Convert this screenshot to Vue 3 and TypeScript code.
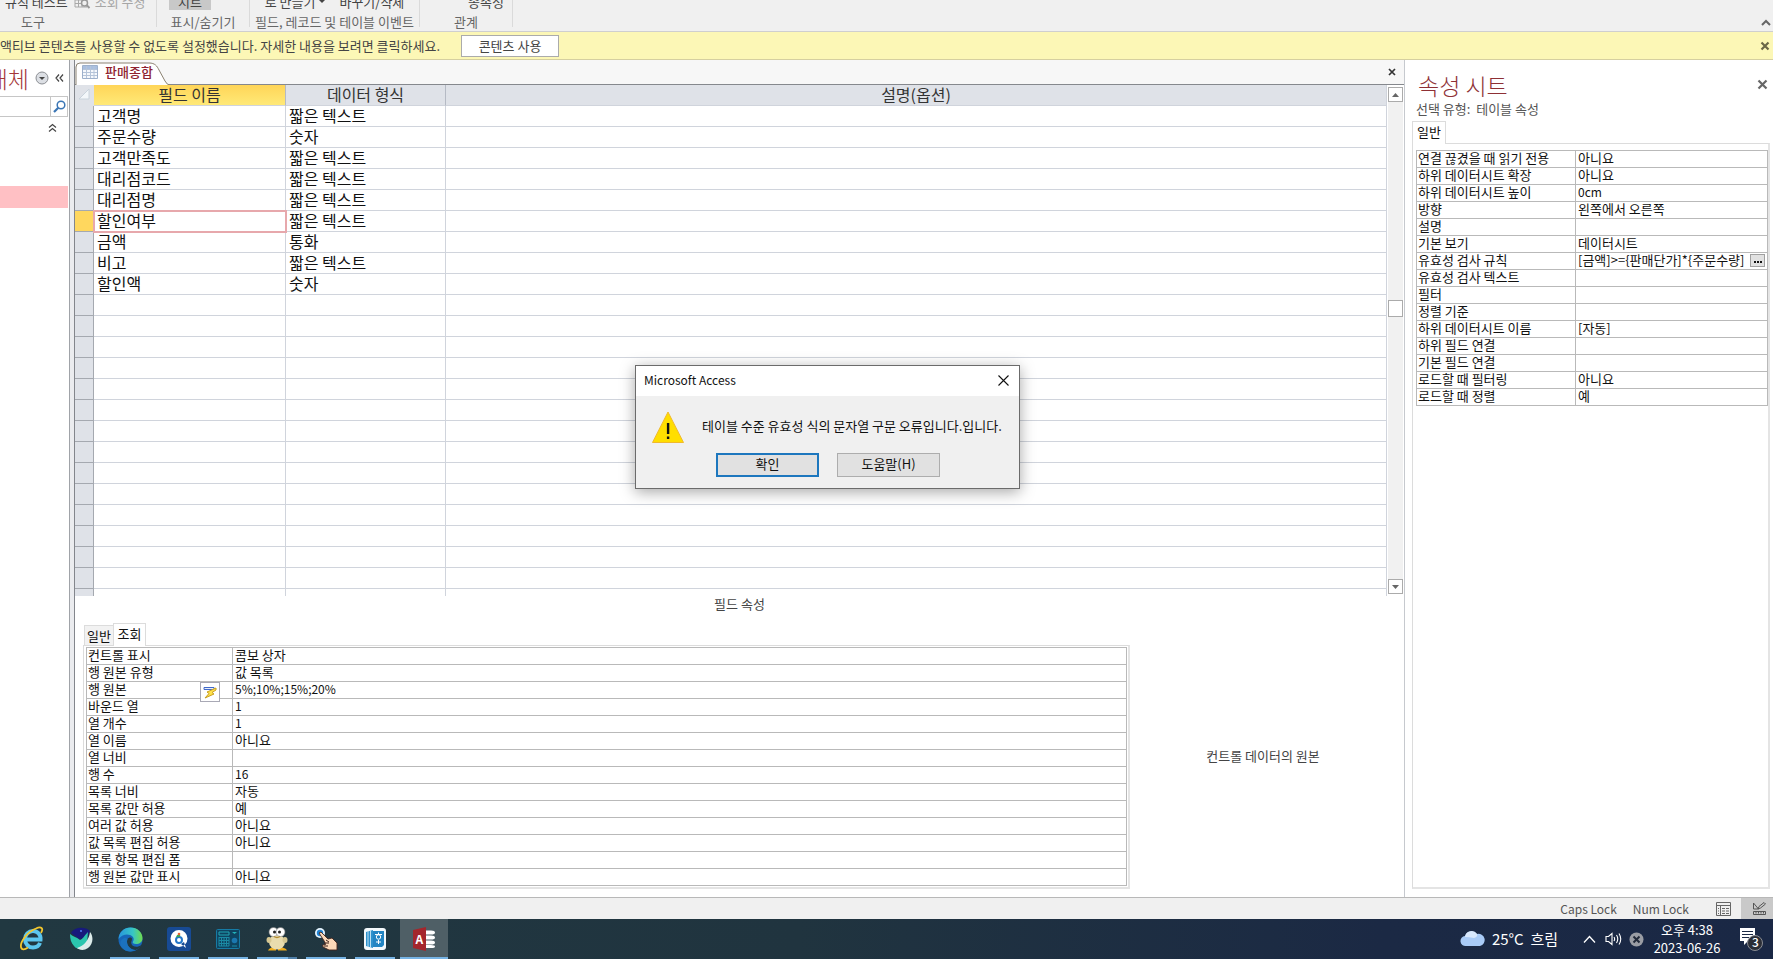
<script setup lang="ts">
import { ref } from 'vue'

interface Field { name: string; type: string }
interface Prop { label: string; value: string; tool?: 'builder' | 'dots' }

const fields: Field[] = [
  { name: '고객명', type: '짧은 텍스트' },
  { name: '주문수량', type: '숫자' },
  { name: '고객만족도', type: '짧은 텍스트' },
  { name: '대리점코드', type: '짧은 텍스트' },
  { name: '대리점명', type: '짧은 텍스트' },
  { name: '할인여부', type: '짧은 텍스트' },
  { name: '금액', type: '통화' },
  { name: '비고', type: '짧은 텍스트' },
  { name: '할인액', type: '숫자' },
]
const selected = ref(5)
const blankRows = 40

const lookup: Prop[] = [
  { label: '컨트롤 표시', value: '콤보 상자' },
  { label: '행 원본 유형', value: '값 목록' },
  { label: '행 원본', value: '5%;10%;15%;20%', tool: 'builder' },
  { label: '바운드 열', value: '1' },
  { label: '열 개수', value: '1' },
  { label: '열 이름', value: '아니요' },
  { label: '열 너비', value: '' },
  { label: '행 수', value: '16' },
  { label: '목록 너비', value: '자동' },
  { label: '목록 값만 허용', value: '예' },
  { label: '여러 값 허용', value: '아니요' },
  { label: '값 목록 편집 허용', value: '아니요' },
  { label: '목록 항목 편집 폼', value: '' },
  { label: '행 원본 값만 표시', value: '아니요' },
]
const sheet: Prop[] = [
  { label: '연결 끊겼을 때 읽기 전용', value: '아니요' },
  { label: '하위 데이터시트 확장', value: '아니요' },
  { label: '하위 데이터시트 높이', value: '0cm' },
  { label: '방향', value: '왼쪽에서 오른쪽' },
  { label: '설명', value: '' },
  { label: '기본 보기', value: '데이터시트' },
  { label: '유효성 검사 규칙', value: '[금액]>={판매단가]*{주문수량]', tool: 'dots' },
  { label: '유효성 검사 텍스트', value: '' },
  { label: '필터', value: '' },
  { label: '정렬 기준', value: '' },
  { label: '하위 데이터시트 이름', value: '[자동]' },
  { label: '하위 필드 연결', value: '' },
  { label: '기본 필드 연결', value: '' },
  { label: '로드할 때 필터링', value: '아니요' },
  { label: '로드할 때 정렬', value: '예' },
]
const isLatin = (text: string) => /^[\x20-\x7e]+$/.test(text)
</script>

<template>
  <div class="app">
    <header class="ribbon">
      <div class="group tools">
        <div class="cmds"><button>규칙 테스트</button>
          <button class="off">
            <svg width="17" height="16" viewBox="0 0 17 16"><path d="M1 3h12v10H1zM1 6h12M1 9.500h12M4.500 3v10M8 3v10" fill="none" stroke="#a8a8a8" /><circle cx="10.500" cy="9" r="3" fill="#f0f0f0" stroke="#999" stroke-width="1.500" /><path d="M12.500 11l3 3" stroke="#999" stroke-width="2" /></svg>
            조회 수정</button></div>
        <div class="gname">도구</div>
      </div>
      <div class="group show">
        <div class="cmds"><button class="on">시트</button></div>
        <div class="gname">표시/숨기기</div>
      </div>
      <div class="group events">
        <div class="cmds"><button>로 만들기 <i class="tri"></i></button><button>바꾸기/삭제</button></div>
        <div class="gname">필드, 레코드 및 테이블 이벤트</div>
      </div>
      <div class="group relation">
        <div class="cmds"><button>종속성</button></div>
        <div class="gname">관계</div>
      </div>
      <button class="collapse" aria-label="리본 축소"><svg width="10" height="8" viewBox="0 0 10 8"><path d="M1 6l4-4 4 4" fill="none" stroke="#666" stroke-width="2" /></svg></button>
    </header>

    <div class="notice">
      <div class="msg"><span>액티브 콘텐츠를 사용할 수 없도록 설정했습니다. 자세한 내용을 보려면 클릭하세요.</span></div>
      <button class="enable">콘텐츠 사용</button>
      <button class="x" aria-label="메시지 닫기"><svg width="10" height="10" viewBox="0 0 10 10"><path d="M1.500 1.500l7 7M8.500 1.500l-7 7" stroke="#6b6748" stroke-width="2.200" /></svg></button>
    </div>

    <main class="work">
      <nav class="nav">
        <div class="navhead">
          <h2>개체</h2>
          <button aria-label="탐색 메뉴"><svg width="14" height="14" viewBox="0 0 14 14"><circle cx="7" cy="7" r="6" fill="#dcdfe4" stroke="#8b8e93" /><path d="M4 6h6l-3 3z" fill="#444" /></svg></button>
          <button aria-label="탐색 창 접기"><svg width="9" height="10" viewBox="0 0 9 10"><path d="M4 1.500L1 5l3 3.500M8 1.500L5 5l3 3.500" fill="none" stroke="#444" stroke-width="1.200" /></svg></button>
        </div>
        <div class="search">
          <input type="text" aria-label="검색" />
          <button aria-label="검색 실행"><svg width="13" height="13" viewBox="0 0 13 13"><circle cx="8" cy="5" r="3.800" fill="#fff" stroke="#3b76b5" stroke-width="1.500" /><path d="M5.300 7.700L1 12" stroke="#3b76b5" stroke-width="2.200" /></svg></button>
        </div>
        <button class="fold" aria-label="그룹 접기"><svg width="9" height="10" viewBox="0 0 9 10"><path d="M1 4.500L4.500 1.500 8 4.500M1 8.500l3.500-3 3.500 3" fill="none" stroke="#444" stroke-width="1.200" /></svg></button>
        <div class="current"></div>
      </nav>
      <div class="splitter"></div>

      <section class="doc">
        <div class="tabs">
          <svg class="tabshape" width="95" height="23" viewBox="0 0 95 23"><path d="M1 23V5q0-4 4-4h69c6 0 8 3 10 7l6 11q2 4 5 4" fill="#fff" stroke="#8b8272" /></svg>
          <button class="tab" role="tab" aria-selected="true">
            <svg width="16" height="14" viewBox="0 0 16 14"><path d="M.5.5h15v13H.5z" fill="#f5f8fc" stroke="#9db0cb" /><path d="M1 1h14v3H1z" fill="#a9bfdf" /><path d="M1 4.500h14M1 7.500h14M1 10.500h14M4.500 1v12M8.500 1v12M12 1v12" stroke="#b5c4d9" fill="none" /></svg>
            판매종합
          </button>
          <button class="x docx" aria-label="문서 닫기"><svg width="8" height="8" viewBox="0 0 8 8"><path d="M1 1l6 6M7 1L1 7" stroke="#333" stroke-width="1.700" /></svg></button>
        </div>
        <div class="gridwrap">
          <div class="gridclip">
            <table class="grid">
              <thead>
                <tr><th class="sel"><svg width="12" height="12" viewBox="0 0 12 12"><path d="M11 1v10H1z" fill="#f3f7fa" stroke="#c9d3dc" /></svg></th><th class="name hot">필드 이름</th><th class="type">데이터 형식</th><th>설명(옵션)</th></tr>
              </thead>
              <tbody>
                <tr v-for="(f, i) in fields" :key="f.name" :class="{ active: i === selected }" @click="selected = i">
                  <td class="sel"></td>
                  <td class="name"><input v-if="i === selected" :value="f.name" aria-label="필드 이름" /><template v-else>{{ f.name }}</template></td>
                  <td>{{ f.type }}</td>
                  <td></td>
                </tr>
                <tr v-for="n in blankRows" :key="n" class="blank"><td class="sel"></td><td></td><td></td><td></td></tr>
              </tbody>
            </table>
          </div>
          <div class="scroll">
            <button aria-label="위로"><svg width="7" height="4" viewBox="0 0 7 4"><path d="M0 4h7L3.500 0z" fill="#666" /></svg></button>
            <div class="track"><div class="thumb"></div></div>
            <button aria-label="아래로"><svg width="7" height="4" viewBox="0 0 7 4"><path d="M0 0h7L3.500 4z" fill="#666" /></svg></button>
          </div>
        </div>
        <div class="caption">필드 속성</div>
        <div class="lower">
          <div class="fieldprops">
            <div class="ptabs" role="tablist"><button role="tab" class="back">일반</button><button role="tab" class="front" aria-selected="true">조회</button></div>
            <div class="panel">
              <table class="props lookup">
                <tbody>
                  <tr v-for="p in lookup" :key="p.label">
                    <th scope="row">{{ p.label }}
                      <button v-if="p.tool" class="builder" aria-label="작성기"><svg width="18" height="18" viewBox="0 0 18 18"><path d="M3 4.500h10v2H3z" fill="#e8eefb" stroke="#4169c8" /><path d="M15 5L6 9l2 1.500L4 15l9-4-2-1.500L15 7z" fill="#ffe14a" stroke="#c9a022" /></svg></button>
                    </th>
                    <td :class="{ latin: isLatin(p.value) }">{{ p.value }}</td>
                  </tr>
                </tbody>
              </table>
            </div>
          </div>
          <p class="hint">컨트롤 데이터의 원본</p>
        </div>
      </section>

      <aside class="sheet">
        <div class="shead"><h1>속성 시트</h1><button class="x" aria-label="속성 시트 닫기"><svg width="11" height="11" viewBox="0 0 11 11"><path d="M1.500 1.500l8 8M9.500 1.500l-8 8" stroke="#666" stroke-width="2.200" /></svg></button></div>
        <p class="kind">선택 유형:&nbsp; 테이블 속성</p>
        <div class="ptabs"><button role="tab" class="front" aria-selected="true">일반</button></div>
        <div class="panel">
          <table class="props">
            <tbody>
              <tr v-for="p in sheet" :key="p.label">
                <th scope="row">{{ p.label }}</th>
                <td :class="{ latin: isLatin(p.value) }"><div class="val"><span>{{ p.value }}</span><button v-if="p.tool" class="dots" aria-label="식 작성기"><i></i><i></i><i></i></button></div></td>
              </tr>
            </tbody>
          </table>
        </div>
      </aside>
    </main>

    <footer class="status">
      <span>Caps Lock</span><span>Num Lock</span>
      <button class="view" aria-label="데이터시트 보기"><svg width="15" height="14" viewBox="0 0 15 14"><path d="M.5.500h14v13H.5zM.5 3.500h14M4.500 3.500v10" fill="none" stroke="#666" /><path d="M6 6.500h3M10 6.500h3M6 9h3M10 9h3M6 11.500h3M10 11.500h3M2 6.500h1M2 9h1M2 11.500h1" stroke="#666" /></svg></button>
      <button class="view design" aria-label="디자인 보기"><svg width="15" height="14" viewBox="0 0 15 14"><path d="M1.500 9.500h12v3h-12zM4 10v1.500M6.500 10v1.500M9 10v1.500M11.500 10v1.500M1.500 1v6h5zM6 7l1-2.500L12 .500l1.500 1.500L8.500 6z" fill="none" stroke="#555" /></svg></button>
    </footer>

    <div class="taskbar">
      <div class="apps">
        <button aria-label="Internet Explorer"><svg width="26" height="26" viewBox="0 0 26 26"><path d="M6.500 13.500h15c.4-5-3-8.500-7.500-8.500s-8 3.700-8 8.200 3.500 8.300 8 8.300c3.500 0 6-1.800 7-4.600" fill="none" stroke="#5cc6ee" stroke-width="4" /><path d="M22 7c3-5 0-7-5-4.500C8 6 1 16 2 21c.6 3.500 4 2.500 7 .5" fill="none" stroke="#f3c62d" stroke-width="1.800" /></svg></button>
        <button aria-label="Whale"><svg width="24" height="24" viewBox="0 0 24 24"><path d="M2 6C5 0 16-1 21 4l-3 7-8 1z" fill="#171a7c" /><path d="M1 7c3 3 7 3 10 6 3-1 4-4 8-8-1 8 0 12-2 15-3 3-9 3-12-1C2 16 1 12 1 7z" fill="#2bc5ae" /><path d="M21 5c4 5 3 12-2 16-4 3-9 2-11 0 7-2 12-8 13-16z" fill="#dcebea" /><circle cx="12" cy="4" r="1" fill="#4f7ff5" /></svg></button>
        <button class="run" aria-label="Edge"><svg width="25" height="25" viewBox="0 0 25 25"><defs><linearGradient id="eg" x1="0" x2="1"><stop stop-color="#2795de" /><stop offset=".6" stop-color="#37c6c5" /><stop offset="1" stop-color="#70dc4d" /></linearGradient></defs><circle cx="12.500" cy="12.500" r="12" fill="#1766b9" /><path d="M.5 12C1 5 6 .5 12.500.5c7 0 12 5 12 10.500 0 4-3 6-6.500 6-2.500 0-4-1-3-2.500 1-1.500 1-3.500-.5-5C12 7 5 6 .5 12z" fill="url(#eg)" /><path d="M9.500 12c-2 5 2 11 8 11 3-1 5-3 6-5-4 3-9 2-10-1-1-2 .5-3 .5-5s-3-2-4.500 0z" fill="#213941" /><path d="M9.500 12c-2 5 2 10.500 8 11-5 3-13 1-15-5-1-5 4-9 7-6z" fill="#1b72bf" /></svg></button>
        <button class="run" aria-label="검색 도우미"><svg width="24" height="24" viewBox="0 0 24 24"><rect width="24" height="24" rx="3" fill="#174a94" /><path d="M12 3a8 8 0 1 1 0 17 8 8 0 0 1 0-17zM14 17l5 4-2-6z" fill="#fff" /><circle cx="12" cy="13" r="3" fill="none" stroke="#2577c9" stroke-width="2" /><path d="M10 10q1-2 3-1" stroke="#39a852" stroke-width="2" fill="none" /><circle cx="12" cy="7" r="1.300" fill="#e95d32" /></svg></button>
        <button class="run" aria-label="제어판"><svg width="24" height="20" viewBox="0 0 24 20"><rect x=".5" y=".5" width="23" height="19" rx="1" fill="#0e4461" stroke="#167ba5" /><path d="M3 3h10v3H3z" fill="none" stroke="#20a5b4" /><path d="M3 8.500h10M3 11.500h10M3 14.500h10M3 17h10M3 8v9M5.500 8v9M8 8v9M10.500 8v9M13 8v9" stroke="#1b8ba5" /><path d="M16 3h5l-2.500 2z" fill="#24b3b9" /><circle cx="18.500" cy="11.500" r="2.800" fill="#1b77af" /><path d="M16 17h5" stroke="#1b8ba5" /></svg></button>
        <button class="run multi" aria-label="알집"><svg width="22" height="24" viewBox="0 0 22 24"><path d="M3 22q3-3 7 0v1.500H2zM12 22q4-3 8 0l1 1.500h-9z" fill="#f0ad1e" /><ellipse cx="11" cy="15" rx="8" ry="7.500" fill="#e9dcae" /><ellipse cx="3" cy="13" rx="2.500" ry="3" fill="#d6c792" /><ellipse cx="19" cy="13" rx="2.500" ry="3" fill="#d6c792" /><circle cx="7.500" cy="5" r="4.500" fill="#fff" stroke="#777" stroke-width=".6" /><circle cx="14.500" cy="5" r="4.500" fill="#fff" stroke="#777" stroke-width=".6" /><circle cx="8.500" cy="5" r="1.500" fill="#222" /><circle cx="13.500" cy="5" r="1.500" fill="#222" /><path d="M8 9.500q3 2 6 0" stroke="#b38d32" stroke-width="1.500" fill="none" /></svg></button>
        <button class="run" aria-label="원격 지원"><svg width="24" height="24" viewBox="0 0 24 24"><circle cx="6" cy="6" r="5" fill="#e6f5ff" /><circle cx="6" cy="6" r="3.200" fill="#2183d2" /><path d="M5 6l2-1 7 7 4-1 5 5v7h-8l-6-3-.5-2 3-.5-1-3z" fill="#fbd8b8" stroke="#43251c" stroke-width=".9" /><path d="M10 16h5M10 19h4M12 13l3 2" stroke="#43251c" /></svg></button>
        <button class="run" aria-label="문서"><svg width="24" height="24" viewBox="0 0 24 24"><rect x="1" y="1" width="22" height="22" rx="3" fill="#f4f9fc" /><path d="M3 5l7-2v18l-7-2z" fill="#2e91cc" /><path d="M5 4v16M7.500 3v18" stroke="#bde0f2" /><path d="M10 4h11v14l-2 2h-9z" fill="#2385c3" /><circle cx="15.500" cy="10" r="2.200" fill="none" stroke="#fff" /><path d="M15.500 5.500v2M12 7.500h7M13 15h5M15.500 13v4" stroke="#fff" /></svg></button>
        <button class="run current-app" aria-label="Access"><svg width="24" height="24" viewBox="0 0 24 24"><path d="M1 3l13-3v24L1 21z" fill="#a4262c" /><text x="3.500" y="16.500" font-size="12" font-weight="700" fill="#fff">A</text><path d="M14 3.500h5q4 0 4 2t-4 2h-5zM14 8.500h5q4 0 4 2t-4 2h-5zM14 13.500h5q4 0 4 2t-4 2h-5z" fill="#fff" /><path d="M14 18h5q4 0 4 1.500T19 21h-5z" fill="#fff" /></svg></button>
      </div>
      <div class="tray">
        <button class="weather"><svg width="25" height="17" viewBox="0 0 25 17"><path d="M6 16a5 5 0 0 1-1-10A7 7 0 0 1 17 4a6 6 0 0 1 3 12z" fill="#a9cbf7" /><path d="M5 7a6.500 6.500 0 0 1 12-3q1 3-3 4-5-1-9-1z" fill="#d8e8fd" /></svg>25°C&nbsp; 흐림</button>
        <button aria-label="숨겨진 아이콘"><svg width="13" height="9" viewBox="0 0 13 9"><path d="M1 7.500l5.500-6 5.500 6" fill="none" stroke="#fff" stroke-width="1.300" /></svg></button>
        <button class="snd" aria-label="볼륨"><svg width="17" height="14" viewBox="0 0 17 14"><path d="M1 4.500h2.500L7 1.500v11L3.500 9.500H1zM9 5q1.300 2 0 4M11.500 3q2.500 4 0 8M14 1.500q3.500 5.500 0 11" fill="none" stroke="#fff" stroke-width="1.100" /></svg></button>
        <button class="err" aria-label="알림 상태"><svg width="15" height="15" viewBox="0 0 15 15"><circle cx="7.500" cy="7.500" r="7" fill="#9a9da4" /><path d="M4.500 4.500l6 6M10.500 4.500l-6 6" stroke="#222a3a" stroke-width="2" /></svg></button>
        <button class="clock"><span>오후 4:38</span><span>2023-06-26</span></button>
        <button class="note" aria-label="알림"><svg width="26" height="26" viewBox="0 0 26 26"><path d="M1 2h15v13H9l-4 4v-4H1z" fill="#fff" /><path d="M3 5.500h11M3 8.500h11M3 11.500h7" stroke="#1b2944" /><circle cx="16" cy="17" r="7.500" fill="#2b2e36" stroke="#8a8d94" /><text x="13" y="21" font-size="12" font-weight="500" fill="#fff">3</text></svg></button>
      </div>
    </div>

    <div class="overlay">
      <div class="dialog" role="alertdialog" aria-labelledby="dt" aria-describedby="dm">
        <div class="dtitle"><span id="dt" class="latin">Microsoft Access</span><button aria-label="닫기"><svg width="11" height="11" viewBox="0 0 11 11"><path d="M.5.500l10 10M10.500.500l-10 10" stroke="#111" stroke-width="1.100" /></svg></button></div>
        <div class="dbody">
          <svg width="32" height="32" viewBox="0 0 32 32"><path d="M16 1L31.500 31.500H.5z" fill="#ffde00" stroke="#f0b92c" /><path d="M14.900 12h2.400v11h-2.400zM14.900 25.500h2.400V28h-2.400z" fill="#111" /></svg>
          <p id="dm">테이블 수준 유효성 식의 문자열 구문 오류입니다.입니다.</p>
        </div>
        <div class="dbtns"><button class="ok">확인</button><button>도움말(H)</button></div>
      </div>
    </div>
  </div>
</template>

<style>
html, body { margin: 0; height: 100%; }
#app { height: 100%; }
</style>

<style scoped>
* { box-sizing: border-box; }
.app { position: relative; display: flex; flex-direction: column; height: 100vh; overflow: hidden; background: #fff; color: #111; font: 13px/16px "Noto Sans CJK KR", "Noto Sans", sans-serif; white-space: nowrap; }
button { display: flex; align-items: center; justify-content: center; margin: 0; padding: 0; border: 0; background: none; font: inherit; color: inherit; cursor: pointer; }
svg { display: block; flex: none; }
p, h1, h2 { margin: 0; }
.latin { font-size: 12px; }

.ribbon { display: flex; flex: none; height: 32px; background: #f0f0f0; border-bottom: 1px solid #cfcfcf; color: #444; overflow: hidden; }
.group { display: flex; flex-direction: column; justify-content: flex-end; gap: 3px; height: 27px; border-right: 1px solid #dadada; }
.cmds { display: flex; flex: none; height: 17px; justify-content: center; }
.gname { flex: none; height: 18px; margin-bottom: -4px; line-height: 18px; text-align: center; color: #666; }
.tools { width: 157px; }
.tools .cmds { justify-content: flex-start; gap: 6px; padding-left: 5px; }
.tools .gname { text-align: left; padding-left: 21px; }
.off { gap: 4px; color: #a6a6a6; }
.show { width: 93px; }
.on { width: 42px; background: #c8c8c8; }
.show .cmds { padding-right: 26px; }
.events { width: 170px; }
.events .cmds { gap: 14px; }
.tri { margin-left: 4px; border: 3px solid transparent; border-top-color: #444; border-bottom: 0; }
.relation { width: 93px; }
.relation .cmds { padding-left: 40px; }
.collapse { margin-left: auto; padding: 14px 2px 0 0; }

.notice { display: flex; flex: none; align-items: center; height: 28px; background: #fcf7b6; border-bottom: 1px solid #d5cfa0; color: #444; padding-right: 3px; }
.msg { display: flex; justify-content: flex-end; width: 440px; overflow: hidden; }
.msg span { flex: none; }
.enable { width: 98px; height: 22px; margin-left: 21px; background: #fff; border: 1px solid #ababab; }
.x { margin-left: auto; }

.work { display: flex; flex: 1; min-height: 0; border-bottom: 1px solid #b8b8b8; }
.nav { display: flex; flex-direction: column; width: 69px; padding-right: 1px; overflow: hidden; }
.navhead { display: flex; align-items: center; justify-content: flex-end; gap: 6px; height: 36px; padding-right: 4px; }
.navhead h2 { flex: none; font-weight: 300; font-size: 23px; line-height: 30px; color: #a4373a; }
.search { display: flex; height: 21px; border: 1px solid #c6c6c6; border-left: 0; }
.search input { flex: 1; min-width: 0; border: 0; padding: 0 4px; outline: 0; font: inherit; }
.search button { width: 17px; border-left: 1px solid #c6c6c6; }
.fold { align-self: flex-end; width: 9px; height: 22px; margin-right: 11px; }
.current { height: 22px; margin-top: 47px; background: #ffc0c4; }
.splitter { width: 6px; background: #ebecef; border-left: 1px solid #a0a3a8; border-right: 1px solid #83868c; }

.doc { display: flex; flex: 1; flex-direction: column; min-width: 0; border-right: 1px solid #c6c9ce; }
.tabs { position: relative; display: flex; flex: none; align-items: center; height: 25px; background: #f7f7f7; border-bottom: 1px solid #85888d; padding-right: 8px; }
.tabshape { position: absolute; left: 0; top: 2px; }
.tab { position: relative; gap: 7px; padding: 0 7px 1px; color: #8f2330; font-weight: 500; height: 22px; }
.gridwrap { display: flex; flex: 1; min-height: 0; }
.gridclip { flex: 1; overflow: hidden; border-right: 1px solid #d0d4dc; }
.grid { width: 100%; table-layout: fixed; border-collapse: separate; border-spacing: 0; font-size: 16px; line-height: 18px; }
.grid th, .grid td { height: 21px; padding: 0 3px 2px; border-right: 1px solid #d0d4dc; border-bottom: 1px solid #d0d4dc; overflow: hidden; }
.grid th:last-child, .grid td:last-child { border-right: 0; }
.grid th { background: #dfe2e8; font-weight: 400; color: #333; border-right-color: #b5bac4; }
.grid .sel { width: 19px; background: #dfe2e8; border-right-color: #a5a9b0; border-bottom-color: #a5a9b0; }
.grid thead .sel { border-bottom-color: #dfe2e8; border-right-color: #dfe2e8; }
.grid .name { width: 192px; }
.grid .type { width: 160px; }
.grid .hot { background: linear-gradient(#ffd558, #ffe977); }
.grid .active .sel { background: #ffd75e; }
.grid .active .name { outline: 2px solid #e7a8ac; outline-offset: -1px; }
.grid input { display: block; width: 100%; height: 18px; padding: 0; border: 0; outline: 0; background: none; font: inherit; color: inherit; }
.scroll { display: flex; flex-direction: column; width: 17px; padding: 2px 1px 2px; background: #fff; }
.scroll button { flex: none; width: 15px; height: 15px; border: 1px solid #ababab; background: #fff; }
.track { flex: 1; background: #f1f1f1; padding-top: 198px; }
.thumb { width: 15px; height: 17px; border: 1px solid #ababab; background: #fff; }
.caption { flex: none; height: 27px; line-height: 16px; text-align: center; color: #444; }
.lower { display: flex; flex: none; padding: 0 0 8px 8px; }
.fieldprops { flex: 1; }
.ptabs { display: flex; align-items: flex-end; height: 22px; }
.ptabs button { border: 1px solid #dcdcdc; border-bottom: 0; }
.ptabs .back { width: 29px; height: 20px; margin-left: 1px; background: #f2f2f2; border-right: 0; }
.ptabs .front { position: relative; z-index: 1; width: 34px; height: 23px; margin-bottom: -1px; background: #fff; padding-bottom: 3px; }
.lower .front { width: 33px; }
.panel { border: 1px solid #dcdcdc; border-right: 2px solid #e4e4e4; border-bottom: 2px solid #e4e4e4; padding: 1px 1px 1px 2px; }
.props { width: 100%; table-layout: fixed; border-collapse: collapse; line-height: 14px; }
.props th, .props td { height: 17px; padding: 0 2px 2px; border: 1px solid #b9b9b9; text-align: left; font-weight: 400; }
.props th { position: relative; width: 159px; padding-left: 1px; }
.props.lookup th { width: 146px; }
.builder { position: absolute; right: 12px; top: 0; z-index: 1; width: 20px; height: 20px; border: 1px solid #a9a9b5; background: #fff; }
.hint { flex: 0 0 274px; padding-right: 8px; align-self: center; text-align: center; color: #444; }

.sheet { display: flex; flex-direction: column; width: 368px; padding: 12px 3px 8px 7px; }
.shead { display: flex; height: 29px; padding-right: 2px; }
.shead h1 { padding-left: 6px; font-size: 23px; line-height: 26px; font-weight: 300; color: #8e3035; }
.shead .x { align-self: flex-start; margin-top: 7px; }
.kind { height: 20px; padding-left: 4px; line-height: 16px; color: #555; }
.sheet .panel { flex: 1; padding: 6px 0 0 3px; }
.val { display: flex; align-items: center; justify-content: space-between; height: 14px; }
.dots { gap: 1px; width: 15px; height: 13px; padding-top: 3px; border: 1px solid #a0a0a0; background: #e1e1e1; }
.dots i { width: 2px; height: 2px; background: #111; }

.status { display: flex; flex: none; align-items: center; justify-content: flex-end; height: 21px; background: #f0f0f0; color: #555; font-size: 12px; }
.status span { margin-right: 16px; }
.view { width: 36px; height: 100%; }
.design { width: 32px; background: #c9c9c9; padding-left: 5px; }

.taskbar { display: flex; flex: none; justify-content: space-between; height: 40px; background: linear-gradient(90deg, #213841, #20343f 45%, #1b2944 78%, #1a2845); color: #fff; }
.apps { display: flex; gap: 1px; padding-left: 8px; }
.apps button { position: relative; width: 48px; height: 40px; }
.run::after { content: ""; position: absolute; left: 4px; right: 4px; bottom: 0; height: 2px; background: #76b3e4; }
.multi::after { background: linear-gradient(90deg, #76b3e4 78%, #4f7fa8 78%); }
.current-app { background: #4f5f66; }
.current-app::after { left: 0; right: 0; }
.tray { display: flex; align-items: center; padding-right: 8px; }
.weather { gap: 7px; margin-right: 25px; padding-bottom: 1px; font-size: 15px; }
.snd { margin-left: 9px; }
.err { margin-left: 7px; }
.clock { flex-direction: column; width: 86px; line-height: 18px; }
.note { margin-left: 9px; }

.overlay { position: absolute; inset: 365px 0 auto 0; display: flex; justify-content: center; padding-right: 118px; }
.dialog { width: 385px; background: #f0f0f0; border: 1px solid #6b6b6b; box-shadow: 0 3px 14px rgba(0, 0, 0, .35); }
.dtitle { display: flex; align-items: center; justify-content: space-between; height: 30px; padding: 0 10px 2px 8px; background: #fff; }
.dbody { display: flex; align-items: center; gap: 18px; height: 62px; padding-left: 16px; }
.dbody p { padding-bottom: 2px; }
.dbtns { display: flex; gap: 18px; padding: 0 0 11px 80px; margin-top: -5px; }
.dbtns button { width: 103px; height: 24px; padding-bottom: 2px; background: #e1e1e1; border: 1px solid #adadad; }
.dbtns .ok { border: 2px solid #1d77be; }
</style>
